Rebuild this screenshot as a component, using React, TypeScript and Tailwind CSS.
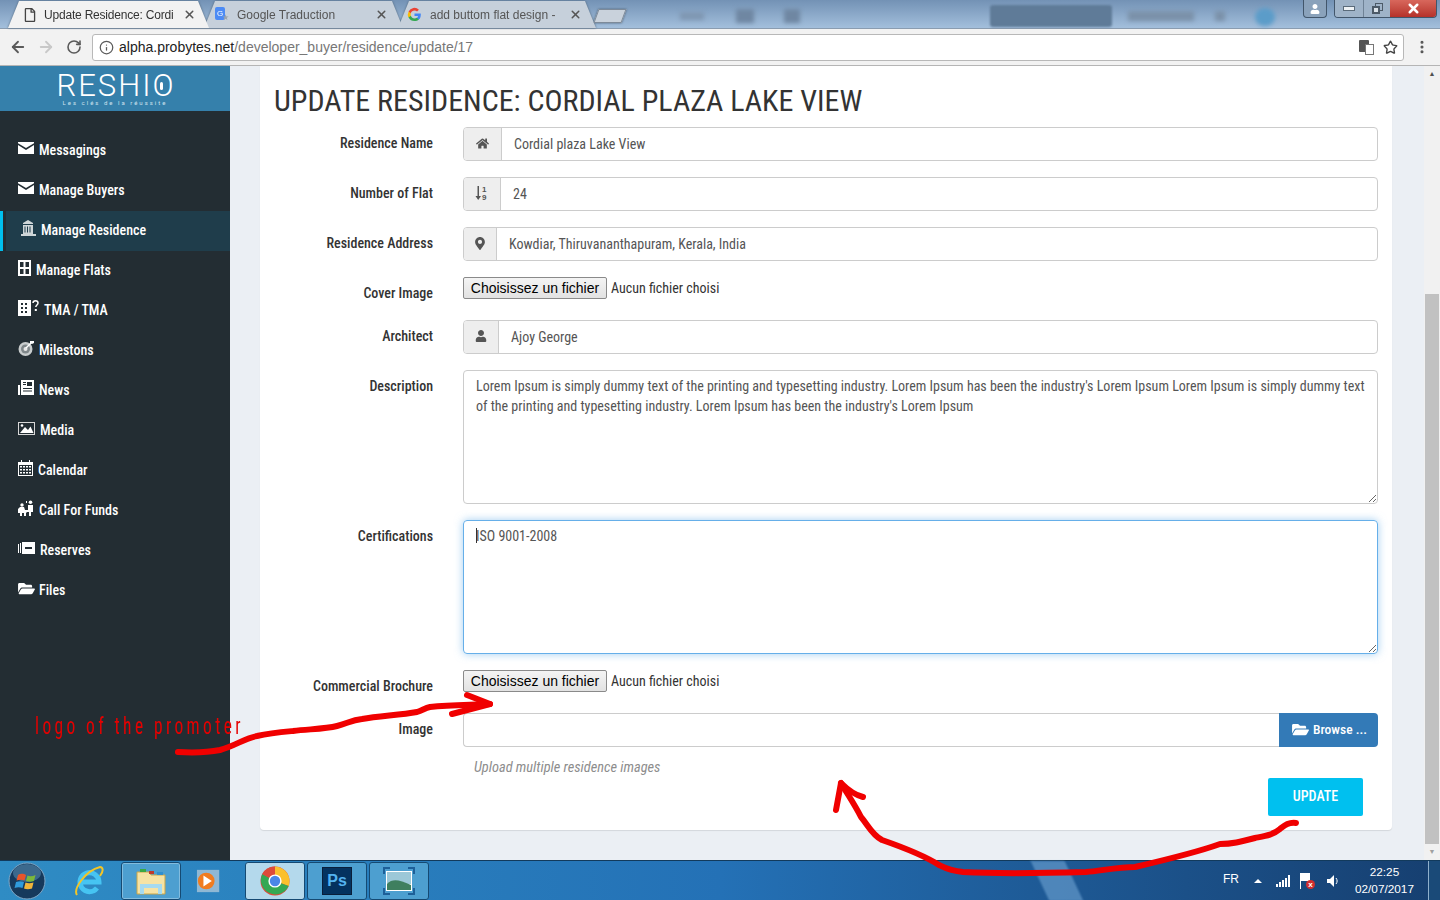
import { FaFolderOpen, FaHome, FaMapMarkerAlt, FaUser, FaRegFile } from "react-icons/fa";
import { Info, ArrowLeft, ArrowRight, RotateCw, Star, X, EllipsisVertical } from "lucide-react";

const EnvelopeIcon = () => (
  <svg viewBox="0 0 16 12" className="w-4 h-[12px]" fill="#fff">
    <path d="M0 0h16v1.200L8 6 0 1.200z" />
    <path d="M0 3l8 5 8-5v9H0z" />
  </svg>
);
const BuildingIcon = () => (
  <svg viewBox="0 0 15 16" className="w-[15px] h-[16px]" fill="#cfd6d8">
    <path d="M7 0 12 3v1H2V3z" />
    <path d="M2 5h10v9H2zM3.500 6.500v6h1v-6zm2.500 0v6h1v-6zm2.500 0v6h1v-6z" fillRule="evenodd" />
    <path d="M0 14h15v2H0z" />
  </svg>
);
const FlatsIcon = () => (
  <svg viewBox="0 0 13 16" className="w-[13px] h-[16px]">
    <rect width="13" height="16" fill="#fff" />
    <path d="M2 2h3.500v5H2zM7.500 2H11v5H7.500zM2 9h3.500v5H2zM7.500 9H11v5H7.500z" fill="#232d33" />
  </svg>
);
const TmaIcon = () => (
  <svg viewBox="0 0 21 16" className="w-[21px] h-[16px]">
    <path d="M0 0h13v16H0z" fill="#fff" />
    <path d="M3 3h2v2H3zM7 3h2v2H7zM3 7h2v2H3zM7 7h2v2H7zM3 11h2v2H3zM7 11h2v2H7z" fill="#232d33" />
    <path d="M15 3c0-3 5-3 5 0 0 2-2 2-2.200 4" fill="none" stroke="#fff" strokeWidth="1.500" />
    <rect x="16.800" y="9" width="2" height="2" fill="#fff" />
  </svg>
);
const TargetIcon = () => (
  <svg viewBox="0 0 16 16" className="w-4 h-4">
    <circle cx="7.500" cy="9" r="7" fill="#c8cccd" />
    <circle cx="7.500" cy="9" r="4.500" fill="#7e8689" />
    <circle cx="7.500" cy="9" r="2" fill="#e8e8e8" />
    <path d="M8 8 14 2" stroke="#fff" strokeWidth="1.500" />
    <path d="M12 1h4v2l-2 1-2-1z" fill="#fff" />
  </svg>
);
const NewsIcon = () => (
  <svg viewBox="0 0 16 16" className="w-4 h-4">
    <path d="M3 0h13v15H3zM0 5h2v10H0z" fill="#fff" />
    <path d="M9 2h5v4H9zM5 8h9v1H5zM5 10.500h9v1H5zM5 2h3v1H5zM5 4h3v1H5z" fill="#232d33" />
  </svg>
);
const MediaIcon = () => (
  <svg viewBox="0 0 17 13" className="w-[17px] h-[13px]">
    <rect x=".5" y=".5" width="16" height="12" fill="none" stroke="#d8d8d8" />
    <path d="M2 11 7 5l3 3 2.500-3.500L15.500 11z" fill="#fff" />
    <circle cx="4" cy="3.500" r="1.300" fill="#fff" />
  </svg>
);
const CalendarIcon = () => (
  <svg viewBox="0 0 15 16" className="w-[15px] h-[16px]">
    <path d="M0 2h3V0h1v2h7V0h1v2h3v14H0z" fill="#fff" />
    <rect x="1" y="5" width="13" height="10" fill="#232d33" />
    <path d="M2 6h2v1.500H2zM5 6h2v1.500H5zM8 6h2v1.500H8zM11 6h2v1.500h-2zM2 9h2v1.500H2zM5 9h2v1.500H5zM8 9h2v1.500H8zM11 9h2v1.500h-2zM2 12h2v1.500H2zM5 12h2v1.500H5zM8 12h2v1.500H8zM11 12h2v1.500h-2z" fill="#fff" />
  </svg>
);
const FundsIcon = () => (
  <svg viewBox="0 0 16 16" className="w-4 h-4" fill="#fff">
    <circle cx="4" cy="5" r="1.700" />
    <circle cx="12.500" cy="2.200" r="1.800" />
    <path d="M2 7h4l1 3h3V5h5v7h-2v4h-2v-4H9l-1 1v3H6v-3H4v3H2v-3H0V9z" />
    <path d="M8 1h1v2H8z" />
  </svg>
);
const ReservesIcon = () => (
  <svg viewBox="0 0 17 12" className="w-[17px] h-[12px]" fill="#fff">
    <path d="M0 2h1v9H0zM2 1h1v10H2z" />
    <path d="M4 0h13v12H4z" />
    <rect x="7" y="5" width="7" height="2" fill="#232d33" />
  </svg>
);

const nav = [
  { label: "Messagings", icon: <EnvelopeIcon />, w: "w-[21px]" },
  { label: "Manage Buyers", icon: <EnvelopeIcon />, w: "w-[21px]" },
  { label: "Manage Residence", icon: <BuildingIcon />, w: "w-[20px]", active: true },
  { label: "Manage Flats", icon: <FlatsIcon />, w: "w-[18px]" },
  { label: "TMA / TMA", icon: <TmaIcon />, w: "w-[26px]" },
  { label: "Milestons", icon: <TargetIcon />, w: "w-[21px]" },
  { label: "News", icon: <NewsIcon />, w: "w-[21px]" },
  { label: "Media", icon: <MediaIcon />, w: "w-[22px]" },
  { label: "Calendar", icon: <CalendarIcon />, w: "w-[20px]" },
  { label: "Call For Funds", icon: <FundsIcon />, w: "w-[21px]" },
  { label: "Reserves", icon: <ReservesIcon />, w: "w-[22px]" },
  { label: "Files", icon: <FaFolderOpen className="w-[17px] h-[15px]" />, w: "w-[21px]" },
];

function Label({ children }: { children: React.ReactNode }) {
  return <div className="w-[159px] shrink-0 text-right text-[14px] font-medium text-[#333] pt-[6px] leading-5">{children}</div>;
}

function Field({ label, icon, addon, value, pad }: { label: string; icon: React.ReactNode; addon: string; value: string; pad: string }) {
  return (
    <div className="flex gap-[30px] h-[34px]">
      <Label>{label}</Label>
      <div className="flex-1 flex border border-[#ccc] rounded-[4px] bg-white overflow-hidden">
        <div className={`${addon} shrink-0 flex items-center justify-center bg-[#eee] border-r border-[#ccc] text-[#555] pb-[2px]`}>{icon}</div>
        <div className={`${pad} flex items-center text-[14px] text-[#555]`}>{value}</div>
      </div>
    </div>
  );
}

function FileRow({ label }: { label: string }) {
  return (
    <div className="flex gap-[30px] h-[22px]">
      <div className="w-[159px] shrink-0 text-right text-[14px] font-medium text-[#333] leading-5 pt-[6px]">{label}</div>
      <div className="flex items-center gap-[4px]">
        <button className="h-[22px] w-[144px] border border-[#8a8a8a] rounded-[2px] bg-gradient-to-b from-[#f4f4f4] to-[#e2e2e2] text-[14px] text-black [font-family:'Liberation_Sans',sans-serif] [font-stretch:normal]">Choisissez un fichier</button>
        <span className="text-[14px] text-[#333]">Aucun fichier choisi</span>
      </div>
    </div>
  );
}

function Tab({ active, title, icon, size }: { active?: boolean; title: string; icon: React.ReactNode; size: string }) {
  return (
    <div className={`${size} h-[27px] flex items-center gap-[8px] [clip-path:polygon(0_100%,11px_0,calc(100%-11px)_0,100%_100%)] text-[12px] [font-family:'Liberation_Sans',sans-serif] [font-stretch:normal] ${active ? "relative z-10 bg-[#f2f2f2] text-[#333]" : "bg-[#c6d0db] text-[#555]"}`}>
      {icon}
      <span className="flex-1 overflow-hidden whitespace-nowrap">{title}</span>
      <X className="w-[13px] h-[13px] text-[#555] shrink-0" strokeWidth={2.8} />
    </div>
  );
}

export default function App() {
  return (
    <div className="relative w-[1440px] h-[900px] overflow-hidden flex flex-col bg-[#ebeff4] [font-family:Roboto,sans-serif] [font-stretch:75%]">
      {/* Window title bar and tabs */}
      <div className="relative h-[29px] shrink-0 bg-gradient-to-b from-[#7392b5] to-[#a3bfdc] flex items-end pl-[8px] border-b border-[#8a9cb0]">
        <div className="absolute left-[990px] top-[5px] w-[122px] h-[22px] bg-[#5f7b98] rounded-[3px] blur-[1px]" />
        <div className="absolute left-[1128px] top-[11px] w-[66px] h-[10px] bg-[#7b91a9] blur-[2px]" />
        <div className="absolute left-[1215px] top-[11px] w-[10px] h-[10px] bg-[#7b91a9] blur-[2px]" />
        <div className="absolute left-[680px] top-[12px] w-[24px] h-[8px] bg-[#7f97b2] blur-[2px]" />
        <div className="absolute left-[736px] top-[9px] w-[18px] h-[14px] bg-[#6f87a2] blur-[2px]" />
        <div className="absolute left-[784px] top-[9px] w-[16px] h-[14px] bg-[#6f87a2] blur-[2px]" />
        <div className="absolute left-[1255px] top-[8px] w-[20px] h-[18px] rounded-full bg-[#5b9cc9] blur-[2px]" />
        <div className="relative flex items-end drop-shadow-[0_0_1px_#4f6479]">
          <Tab active title="Update Residence: Cordi" size="w-[201px] pl-[16px] pr-[13px] tracking-[-0.2px]" icon={<FaRegFile className="w-[12px] h-[14px] text-[#444] shrink-0" />} />
          <Tab title="Google Traduction" size="w-[199px] -ml-[5px] pl-[11px] pr-[15px]" icon={
            <span className="relative w-[14px] h-[15px] shrink-0">
              <span className="absolute left-0 top-0 w-[10px] h-[13px] rounded-[2px] bg-[#4c8bf5] text-white text-[8px] leading-[13px] text-center">G</span>
              <span className="absolute right-0 bottom-0 text-[#9aa3ad] text-[8px] leading-[8px]">★</span>
            </span>
          } />
          <Tab title="add buttom flat design -" size="w-[198px] -ml-[5px] pl-[9px] pr-[14px]" icon={
            <svg viewBox="0 0 16 16" className="w-[15px] h-[15px] shrink-0">
              <path d="M14.700 8.200c0-.5 0-1-.1-1.400H8v2.700h3.800a3.200 3.200 0 0 1-1.400 2.100v1.800h2.300c1.300-1.200 2-3 2-5.200z" fill="#4285f4" />
              <path d="M8 15c1.900 0 3.500-.6 4.700-1.700l-2.300-1.800c-.6.4-1.400.7-2.400.7-1.800 0-3.400-1.200-3.900-2.900H1.700v1.900A7 7 0 0 0 8 15z" fill="#34a853" />
              <path d="M4.100 9.300a4.200 4.200 0 0 1 0-2.600V4.800H1.700a7 7 0 0 0 0 6.400z" fill="#fbbc05" />
              <path d="M8 3.800c1 0 2 .4 2.700 1l2-2A7 7 0 0 0 1.700 4.800l2.400 1.900C4.600 5 6.200 3.800 8 3.800z" fill="#ea4335" />
            </svg>
          } />
          <div className="w-[28px] h-[14px] mb-[5px] bg-[#c9d2dc] border border-[#7d8a99] -skew-x-[20deg]" />
        </div>
      </div>

      {/* Window buttons */}
      <div className="absolute z-20 top-0 left-[1303px] w-[24px] h-[18px] bg-[#8aa2bb] border border-[#42566b] border-t-0 rounded-b-[4px] flex items-center justify-center">
        <FaUser className="w-[10px] h-[10px] text-white" />
      </div>
      <div className="absolute z-20 top-0 left-[1334px] w-[103px] h-[18px] flex border border-[#42566b] border-t-0 rounded-b-[4px] overflow-hidden">
        <div className="w-[28px] bg-[#9fb3c8] flex items-center justify-center"><div className="w-[12px] h-[5px] bg-[#eef2f5] border border-[#5b6b7a]" /></div>
        <div className="w-[27px] bg-[#9fb3c8] flex items-center justify-center border-l border-[#6f8296]">
          <div className="relative w-[11px] h-[11px]">
            <div className="absolute right-0 top-0 w-[8px] h-[8px] border border-[#4c5a68]" />
            <div className="absolute left-0 bottom-0 w-[8px] h-[8px] border-2 border-[#4c5a68] bg-[#dbe3ea]" />
          </div>
        </div>
        <div className="flex-1 bg-gradient-to-b from-[#d8675c] to-[#b5312a] flex items-center justify-center"><X className="w-[15px] h-[15px] text-white" strokeWidth={4} /></div>
      </div>

      {/* Toolbar */}
      <div className="h-[37px] shrink-0 bg-[#f2f2f2] border-b border-[#b5b5b5] flex items-center pl-[9px] pr-[8px] [font-family:'Liberation_Sans',sans-serif] [font-stretch:normal]">
        <ArrowLeft className="w-[18px] h-[18px] text-[#5a5a5a]" strokeWidth={2.4} />
        <ArrowRight className="w-[18px] h-[18px] text-[#c8c8c8] ml-[10px]" strokeWidth={2.4} />
        <RotateCw className="w-[16px] h-[16px] text-[#5a5a5a] ml-[11px]" strokeWidth={2.4} />
        <div className="ml-[10px] w-[1312px] h-[27px] bg-white border border-[#b8b8b8] rounded-[3px] flex items-center pl-[6px] pr-[5px] text-[14px]">
          <Info className="w-[15px] h-[15px] text-[#5a5a5a]" />
          <span className="ml-[5px] text-[#222]">alpha.probytes.net</span>
          <span className="text-[#777]">/developer_buyer/residence/update/17</span>
          <div className="ml-auto flex items-center gap-[9px]">
            <div className="relative w-[15px] h-[15px]">
              <div className="absolute left-0 top-0 w-[10px] h-[12px] bg-[#555] rounded-[1px]" />
              <div className="absolute right-0 bottom-0 w-[9px] h-[11px] bg-white border border-[#777]" />
            </div>
            <Star className="w-[15px] h-[15px] text-[#444]" strokeWidth={2.2} />
          </div>
        </div>
        <EllipsisVertical className="ml-[10px] w-[16px] h-[16px] text-[#555]" strokeWidth={2.6} />
      </div>

      {/* Page */}
      <div className="flex-1 min-h-0 flex">
        <aside className="w-[230px] shrink-0 bg-[#232d33] flex flex-col">
          <div className="h-[45px] shrink-0 bg-[#3580ab] flex flex-col items-center text-white">
            <div className="relative [font-stretch:normal] font-light text-[31px] leading-[26px] mt-[7px] tracking-[2px] ml-[2px]">
              RESHIO
              <span className="absolute right-[12px] top-[9px] w-[3px] h-[8px] rounded-full bg-white" />
            </div>
            <div className="text-[6px] leading-[6px] mt-[1px] tracking-[2px] text-[#cfe2ee] [font-stretch:normal]">Les clés de la réussite</div>
          </div>
          <nav className="pt-[20px] flex flex-col">
            {nav.map((item) => (
              <div key={item.label} className={`h-[40px] flex items-center pb-[2px] text-white text-[14px] font-medium ${item.active ? "border-l-[3px] border-[#00c0ef] pl-[18px] bg-[#1f3d4b] shadow-[inset_3px_0_0_#232d33]" : "pl-[18px]"}`}>
                <span className={`${item.w} shrink-0 -mt-[4px]`}>{item.icon}</span>
                <span>{item.label}</span>
              </div>
            ))}
          </nav>
        </aside>

        <main className="flex-1 min-w-0 pl-[30px] pr-[32px]">
          <div className="h-[764px] bg-white rounded-b-[4px] shadow-[0_1px_1px_rgba(0,0,0,0.1)] pl-[14px] pr-[14px]">
            <h1 className="text-[30px] leading-[36px] pt-[17px] pb-[8px] h-[61px] text-[#333] font-normal">UPDATE RESIDENCE: CORDIAL PLAZA LAKE VIEW</h1>
            <div className="flex flex-col">
              <Field label="Residence Name" addon="w-[38px]" pad="pl-[12px]" value="Cordial plaza Lake View" icon={<FaHome className="w-[13px] h-[13px]" />} />
              <div className="h-[16px]" />
              <Field label="Number of Flat" addon="w-[37px]" pad="pl-[12px]" value="24" icon={
                <svg viewBox="0 0 14 16" className="w-[14px] h-[16px]" fill="#555">
                  <path d="M2.500 1h1.500v10h2L3.200 15 .5 11h2z" />
                  <text x="7" y="7" fontSize="8" fontWeight="700" fontFamily="Liberation Sans">1</text>
                  <text x="7" y="15" fontSize="8" fontWeight="700" fontFamily="Liberation Sans">9</text>
                </svg>
              } />
              <div className="h-[16px]" />
              <Field label="Residence Address" addon="w-[33px]" pad="pl-[12px]" value="Kowdiar, Thiruvananthapuram, Kerala, India" icon={<FaMapMarkerAlt className="w-[12px] h-[13px]" />} />
              <div className="h-[16px]" />
              <FileRow label="Cover Image" />
              <div className="h-[21px]" />
              <Field label="Architect" addon="w-[35px]" pad="pl-[12px]" value="Ajoy George" icon={<FaUser className="w-[12px] h-[12px]" />} />
              <div className="h-[16px]" />
              <div className="flex gap-[30px] h-[134px]">
                <Label>Description</Label>
                <textarea readOnly className="flex-1 border border-[#ccc] rounded-[4px] px-[12px] py-[5px] text-[14px] leading-[20px] text-[#555] outline-none" defaultValue="Lorem Ipsum is simply dummy text of the printing and typesetting industry. Lorem Ipsum has been the industry's Lorem Ipsum Lorem Ipsum is simply dummy text of the printing and typesetting industry. Lorem Ipsum has been the industry's Lorem Ipsum" />
              </div>
              <div className="h-[16px]" />
              <div className="flex gap-[30px] h-[134px]">
                <Label>Certifications</Label>
                <div className="relative flex-1 flex">
                  <textarea readOnly className="flex-1 border border-[#66afe9] rounded-[4px] px-[12px] py-[5px] text-[14px] leading-[20px] text-[#555] outline-none shadow-[0_0_8px_rgba(102,175,233,0.6)]" defaultValue="ISO 9001-2008" />
                  <span className="absolute left-[13px] top-[8px] w-px h-[15px] bg-[#333]" />
                </div>
              </div>
              <div className="h-[16px]" />
              <FileRow label="Commercial Brochure" />
              <div className="h-[21px]" />
              <div className="flex gap-[30px] h-[34px]">
                <Label>Image</Label>
                <div className="flex-1 flex">
                  <div className="flex-1 border border-[#ccc] border-r-0 rounded-l-[4px]" />
                  <div className="w-[99px] bg-[#337ab7] rounded-r-[4px] text-white text-[13.5px] font-medium flex items-center pl-[12px] gap-[3px] pb-[2px]">
                    <FaFolderOpen className="w-[19px] h-[15px]" />
                    <span>Browse ...</span>
                  </div>
                </div>
              </div>
              <div className="pl-[200px] pr-[15px] flex justify-between items-start">
                <p className="mt-[11px] text-[14.4px] italic text-[#8d8d8d] leading-5">Upload multiple residence images</p>
                <button className="mt-[31px] w-[95px] h-[38px] pb-[2px] bg-[#00c0ef] text-white text-[14px] font-medium rounded-[2px]">UPDATE</button>
              </div>
            </div>
          </div>
        </main>

        <div className="w-[16px] shrink-0 bg-[#f1f1f1] flex flex-col items-center">
          <div className="h-[16px] text-[7px] leading-[16px] text-[#505050] [font-stretch:normal]">▲</div>
          <div className="mt-[212px] h-[550px] w-[14px] bg-[#c1c1c1]" />
          <div className="h-[16px] text-[7px] leading-[16px] text-[#a0a0a0] [font-stretch:normal]">▼</div>
        </div>
      </div>

      {/* Taskbar */}
      <div className="relative h-[40px] shrink-0 bg-gradient-to-r from-[#2f8cc4] via-[#2471b6] to-[#163f70] flex items-center border-t border-[#123a5c] [font-family:'Liberation_Sans',sans-serif] [font-stretch:normal]">
        <div className="absolute left-[1040px] top-0 w-[34px] h-[40px] bg-[#7fb3e0] opacity-50 skew-x-[25deg] blur-[1px]" />
        <svg viewBox="0 0 38 38" className="ml-[8px] w-[38px] h-[38px] shrink-0">
          <circle cx="19" cy="19" r="18" fill="#16395c" stroke="#7fa7c6" />
          <ellipse cx="19" cy="11" rx="14" ry="9" fill="#4d7ea3" opacity=".7" />
          <path d="M10 13c3-2 6-1 8 0l-1.500 5.500c-2-1-5-1-8 0z" fill="#e8552a" />
          <path d="M19.500 13.500c2 1 5 1 8-.5l-1.500 6c-3 1-5.500 1-8 0z" fill="#7cb83a" />
          <path d="M8 20c3-1 5.500-1 8 0l-1.500 6c-2.500-1-5-1-8 0z" fill="#2f9bdc" />
          <path d="M17.500 20.500c2 1 5 1 8 0l-1.500 6c-3 1-5.500 1-8 0z" fill="#f2b53a" />
        </svg>
        <svg viewBox="0 0 32 32" className="ml-[27px] w-[32px] h-[32px] shrink-0">
          <path d="M7 17h19A9.500 9.500 0 1 0 24 23" fill="none" stroke="#46c4f2" strokeWidth="5" />
          <path d="M4 30C0 24 12 6 27 2c3 0 4 4 0 9" fill="none" stroke="#f3c526" strokeWidth="2" />
        </svg>
        <div className="ml-[16px] w-[60px] h-[38px] border border-[#154a73] rounded-[3px] bg-[#4d9fd0] shadow-[inset_0_0_0_1px_rgba(255,255,255,0.3)] flex items-center justify-center">
          <svg viewBox="0 0 32 30" className="w-[32px] h-[30px]">
            <path d="M2 6h12l2 3h14v19H2z" fill="#f6e3a4" stroke="#c9a548" />
            <path d="M5 18h22v10h-4v-6H9v6H5z" fill="#a5daf0" />
            <rect x="5" y="3" width="6" height="3" fill="#39a845" />
            <rect x="14" y="5" width="5" height="3" fill="#c0392b" />
            <rect x="22" y="6" width="6" height="3" fill="#2f8fd0" />
          </svg>
        </div>
        <svg viewBox="0 0 28 28" className="ml-[15px] w-[26px] h-[28px] shrink-0">
          <rect x="1" y="2" width="24" height="24" fill="#8fb8d4" />
          <circle cx="11" cy="14" r="9" fill="#f07c1f" />
          <path d="M8 8l9 6-9 6z" fill="#fff" />
        </svg>
        <div className="ml-[23px] w-[60px] h-[38px] border border-[#154a73] rounded-[3px] bg-[#b4d9ec] flex items-center justify-center">
          <svg viewBox="0 0 30 30" className="w-[30px] h-[30px]">
            <circle cx="15" cy="15" r="14.500" fill="#dd4b3a" />
            <path d="M15 .5A14.500 14.500 0 0 1 28.600 20L15 15z" fill="#fbc02d" />
            <path d="M28.600 20A14.500 14.500 0 0 1 2.200 8L15 15z" fill="#34a853" />
            <path d="M15 .5A14.500 14.500 0 0 0 2.200 8L15 15z" fill="#dd4b3a" />
            <circle cx="15" cy="15" r="6.600" fill="#fff" />
            <circle cx="15" cy="15" r="5.200" fill="#4a86e8" />
          </svg>
        </div>
        <div className="ml-[2px] w-[60px] h-[38px] border border-[#154a73] rounded-[3px] bg-[#4d9fd0] flex items-center justify-center">
          <div className="w-[30px] h-[28px] bg-[#04325f] border border-[#0a1e3a] flex items-center justify-center text-[#53b3f0] text-[16px] font-bold">Ps</div>
        </div>
        <div className="ml-[2px] w-[60px] h-[38px] border border-[#154a73] rounded-[3px] bg-[#4d9fd0] flex items-center justify-center">
          <svg viewBox="0 0 32 28" className="w-[32px] h-[28px]">
            <rect x="3" y="4" width="26" height="20" fill="#fff" />
            <rect x="4" y="5" width="24" height="12" fill="#9cc8d8" />
            <path d="M4 17c6-6 12-4 24 1v5H4z" fill="#3f7f5f" />
            <path d="M1 7V1h6M25 1h6v6M1 21v6h6M31 21v6h-6" fill="none" stroke="#1d5f98" strokeWidth="2" />
          </svg>
        </div>
        <div className="ml-auto flex items-center text-white">
          <span className="text-[12px] mr-[15px] -mt-[4px]">FR</span>
          <span className="w-0 h-0 border-x-[4px] border-x-transparent border-b-[4px] border-b-white mr-[14px]" />
          <div className="flex items-end gap-[1px] h-[12px] mr-[10px]">
            <i className="w-[2px] h-[3px] bg-white" /><i className="w-[2px] h-[5px] bg-white" /><i className="w-[2px] h-[7px] bg-white" /><i className="w-[2px] h-[9px] bg-white" /><i className="w-[2px] h-[12px] bg-white" />
          </div>
          <div className="relative w-[15px] h-[16px] mr-[11px]">
            <div className="absolute left-0 top-0 w-[1px] h-[16px] bg-white" />
            <div className="absolute left-[1px] top-0 w-[9px] h-[8px] bg-white" />
            <div className="absolute right-0 bottom-0 w-[9px] h-[9px] rounded-full bg-[#d22f2f] text-white text-[8px] leading-[9px] text-center font-bold">x</div>
          </div>
          <svg viewBox="0 0 14 14" className="w-[14px] h-[14px] mr-[15px]"><path d="M1 5h3l4-4v12l-4-4H1z" fill="#fff" /><path d="M10 4c1.500 2 1.500 4 0 6" stroke="#fff" fill="none" /></svg>
          <div className="text-[11.8px] leading-[17px] text-center mr-[26px]">
            <div>22:25</div>
            <div>02/07/2017</div>
          </div>
        </div>
        <div className="absolute right-0 top-0 w-[12px] h-[40px] bg-[#1a4a78] border-l border-[#8fb0cc]" />
      </div>

      {/* Hand drawn annotations on top of the screenshot */}
      <div className="absolute left-[35px] top-[710px] origin-left scale-x-[0.757] whitespace-nowrap text-[#e60000] text-[23px] font-normal tracking-[4.5px]">logo of the promoter</div>
      <svg className="absolute inset-0 w-[1440px] h-[900px] pointer-events-none" viewBox="0 0 1440 900" fill="none" stroke="#f00000" strokeWidth="6" strokeLinecap="round" strokeLinejoin="round">
        <path d="M178 752C195 753 210 752 220 750 235 746 245 738 257 736 270 733 282 732 293 731 310 729 325 729 337 726 348 723 352 720 362 719 380 716 400 715 417 712 423 710 425 708 430 707 450 705 470 705 490 704" />
        <path d="M467 695 490 704 452 714" />
        <path d="M1296 823C1288 822 1284 826 1280 829 1273 835 1265 836 1255 838 1240 842 1232 844 1220 844 1195 853 1165 860 1135 867 1118 867 1100 871 1086 872 1050 873 1000 874 963 872 950 871 945 868 939 865 925 856 905 848 882 840 872 835 868 825 861 817 855 805 848 795 841 783" />
        <path d="M836 810 841 783C848 790 855 795 863 797" />
      </svg>
    </div>
  );
}
